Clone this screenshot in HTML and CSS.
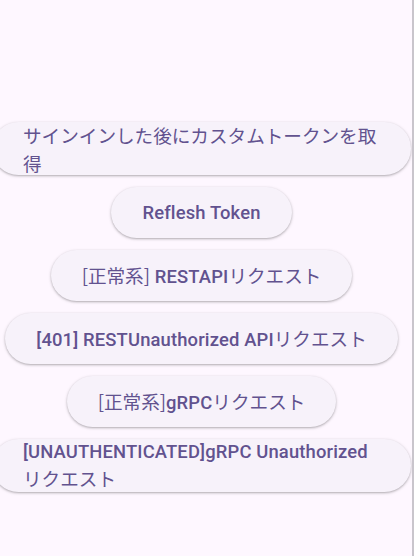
FILE: index.html
```html
<!DOCTYPE html>
<html lang="ja">
<head>
<meta charset="utf-8">
<title>Auth Sample</title>
<link rel="stylesheet" href="styles.css">
</head>
<body>
<div class="page">
  <main class="column">
    <button class="btn btn-wide btn-two"><span class="label"><span class="ja">サインインした後にカスタムトークンを取得</span></span></button>
    <button class="btn"><span class="label">Reflesh Token</span></button>
    <button class="btn"><span class="label"><span class="ja">[正常系]</span> RESTAPI<span class="ja">リクエスト</span></span></button>
    <button class="btn"><span class="label">[401] RESTUnauthorized API<span class="ja">リクエスト</span></span></button>
    <button class="btn"><span class="label"><span class="ja">[正常系]</span>gRPC<span class="ja">リクエスト</span></span></button>
    <button class="btn btn-wide btn-two"><span class="label">[UNAUTHENTICATED]gRPC Unauthorized <span class="ja">リクエスト</span></span></button>
  </main>
  <div class="spacer"></div>
  <div class="strip"></div>
</div>
</body>
</html>
```

FILE: styles.css
```css
html, body {
  margin: 0;
  padding: 0;
  height: 100%;
  background: #fef7ff;
  overflow: hidden;
}

.page {
  display: flex;
  width: 414px;
  height: 556px;
}

.column {
  width: 403px;
  flex: none;
  display: flex;
  flex-direction: column;
  align-items: center;
  gap: 12px;
  padding-top: 122px;
}

.spacer {
  flex: 1;
}

.strip {
  width: 2px;
  background: #c9c5cc;
}

.btn {
  box-sizing: border-box;
  height: 51px;
  padding: 0 31px;
  border: none;
  border-radius: 999px;
  background: #f7f2fa;
  color: #62528f;
  font-family: Roboto, "Noto Sans CJK JP", sans-serif;
  font-weight: 500;
  font-size: 18.4px;
  letter-spacing: 0.15px;
  line-height: 26px;
  white-space: nowrap;
  box-shadow: 0 1px 2px rgba(0, 0, 0, 0.22), 0 1px 3px 1px rgba(0, 0, 0, 0.08);
  flex: none;
  cursor: pointer;
}

.btn-wide {
  width: 419px;
  margin: 0 -8px;
  white-space: normal;
  text-align: left;
}

.btn-two {
  height: 53px;
}

.label {
  display: block;
}

.ja {
  font-family: "Noto Sans CJK JP", sans-serif;
  font-weight: 400;
  font-size: 18.6px;
  letter-spacing: 0;
}
```
